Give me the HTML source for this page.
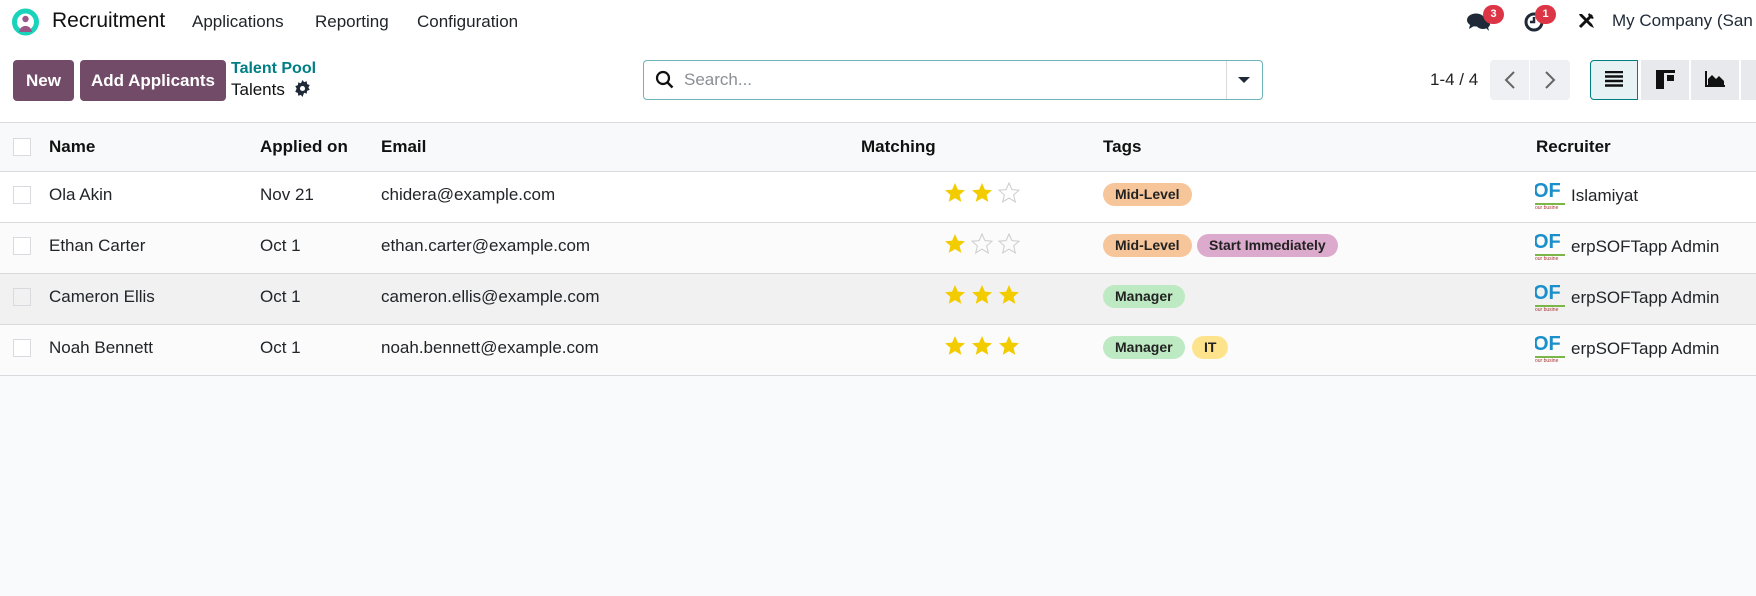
<!DOCTYPE html>
<html><head><meta charset="utf-8"><style>
*{box-sizing:border-box;margin:0;padding:0}
body{width:1756px;height:596px;background:#f9fafb;font-family:"Liberation Sans",sans-serif;color:#212529;position:relative;overflow:hidden}
.a{position:absolute;white-space:nowrap}
.nav{left:0;top:0;width:1756px;height:46px;background:#fff}
.top{left:0;top:46px;width:1756px;height:77px;background:#fff}
.btn{background:#714B67;color:#fff;font-weight:bold;font-size:17px;border-radius:4px;height:41px;line-height:41px;text-align:center;top:60px}
.hdr{left:0;top:122px;width:1756px;height:50px;background:#f8f9fa;border-top:1px solid #d8dadd;border-bottom:1px solid #d8dadd}
.row{left:0;width:1756px;height:51px;border-bottom:1px solid #d8dadd}
.cb{width:18px;height:18px;border:1px solid #d8dadd;background:#fff;left:13px}
.t{font-size:17px}
.th{font-size:17px;font-weight:bold;color:#111}
.tag{height:23px;line-height:23px;border-radius:12px;padding:0 12px;font-size:14px;font-weight:bold;color:#222}
.badge{background:#dc3545;color:#fff;font-size:11px;font-weight:bold;border-radius:10px;width:21px;height:19px;line-height:19px;text-align:center}
.vb{top:60px;height:40px;width:48px;background:#e7e9ed}
</style></head><body>
<div class="a nav"></div>
<div class="a top"></div>
<svg class="a" style="left:11px;top:8px" width="29" height="29" viewBox="0 0 29 29"><circle cx="14.5" cy="14" r="11" fill="none" stroke="#1ad3bb" stroke-width="5"/><circle cx="14.5" cy="11" r="3.2" fill="#9c5789"/><path d="M8 24c1-5 4-6 6.5-6s5.5 1 6.5 6z" fill="#9c5789"/></svg>
<div class="a" style="left:52px;top:9px;font-size:21px;color:#111">Recruitment</div>
<div class="a t" style="left:192px;top:12px;font-size:17px">Applications</div>
<div class="a t" style="left:315px;top:12px;font-size:17px">Reporting</div>
<div class="a t" style="left:417px;top:12px;font-size:17px">Configuration</div>
<svg class="a" style="left:1467px;top:12px" width="24" height="20" viewBox="0 0 24 20"><ellipse cx="9" cy="8" rx="9" ry="6.5" fill="#1f2937"/><path d="M3 13l-1 4 5-3z" fill="#1f2937"/><ellipse cx="16" cy="12" rx="7" ry="5" fill="#1f2937"/><path d="M19 16l3 3-1-4z" fill="#1f2937"/></svg>
<div class="a badge" style="left:1483px;top:5px">3</div>
<svg class="a" style="left:1523px;top:11px" width="22" height="22" viewBox="0 0 22 22"><circle cx="11" cy="11" r="8" fill="none" stroke="#1f2937" stroke-width="3"/><path d="M11 6v5h-4" stroke="#1f2937" stroke-width="2.5" fill="none"/></svg>
<div class="a badge" style="left:1535px;top:5px">1</div>
<svg class="a" style="left:1576px;top:11px" width="20" height="20" viewBox="0 0 20 20"><path d="M4 16L16 4" stroke="#111" stroke-width="3"/><path d="M13 2l5 5-2 1-4-4z" fill="#111"/><path d="M3 3l3 0 10 10 2 4-4-2L4 5z" fill="#111"/></svg>
<div class="a" style="left:1612px;top:11px;font-size:17px;color:#1f2937">My Company (San</div>

<div class="a btn" style="left:13px;width:61px">New</div>
<div class="a btn" style="left:80px;width:146px">Add Applicants</div>
<div class="a" style="left:231px;top:60px;font-size:16px;font-weight:bold;color:#017e84">Talent Pool</div>
<div class="a" style="left:231px;top:80px;font-size:17px;color:#111">Talents</div>
<svg class="a" style="left:294px;top:80px" width="17" height="17" viewBox="0 0 16 16"><path fill="#1f2937" d="M8 0l1.5 2 2.5-.8.3 2.6 2.5 1-1.3 2.2 1.3 2.2-2.5 1-.3 2.6-2.5-.8L8 16l-1.5-2-2.5.8-.3-2.6-2.5-1L2.5 8 1.2 5.8l2.5-1L4 2.2l2.5.8z"/><circle cx="8" cy="8" r="2.4" fill="#fff"/></svg>

<div class="a" style="left:643px;top:60px;width:620px;height:40px;border:1px solid #6eb3b8;border-radius:4px;background:#fff"></div>
<svg class="a" style="left:655px;top:70px" width="20" height="20" viewBox="0 0 20 20"><circle cx="8" cy="8" r="6" fill="none" stroke="#111" stroke-width="2.2"/><path d="M12.5 12.5l5 5" stroke="#111" stroke-width="2.4"/></svg>
<div class="a" style="left:684px;top:70px;font-size:17px;color:#8a8f95">Search...</div>
<div class="a" style="left:1226px;top:61px;width:1px;height:38px;background:#d8dadd"></div>
<svg class="a" style="left:1237px;top:76px" width="14" height="8" viewBox="0 0 14 8"><path d="M1 1h12L7 7z" fill="#1f2937"/></svg>

<div class="a" style="left:1430px;top:70px;font-size:17px;color:#222">1-4 / 4</div>
<div class="a" style="left:1490px;top:60px;width:80px;height:40px;background:#eff0f3;border-radius:4px"></div>
<div class="a" style="left:1529px;top:60px;width:1px;height:40px;background:#fff"></div>
<svg class="a" style="left:1503px;top:70px" width="14" height="20" viewBox="0 0 14 20"><path d="M11 2L3 10l8 8" stroke="#666" stroke-width="2" fill="none"/></svg>
<svg class="a" style="left:1543px;top:70px" width="14" height="20" viewBox="0 0 14 20"><path d="M3 2l8 8-8 8" stroke="#666" stroke-width="2" fill="none"/></svg>

<div class="a vb" style="left:1590px;background:#e6f2f3;border:1px solid #017e84;border-radius:4px 0 0 4px"></div>
<div class="a vb" style="left:1641px"></div>
<div class="a vb" style="left:1691px"></div>
<div class="a vb" style="left:1741px;width:15px"></div>
<svg class="a" style="left:1605px;top:71px" width="18" height="16" viewBox="0 0 18 16"><path d="M0 1h18M0 5.5h18M0 10h18M0 14.5h18" stroke="#111" stroke-width="2.5"/></svg>
<svg class="a" style="left:1656px;top:70px" width="19" height="19" viewBox="0 0 19 19"><path d="M0 0h19v3H8v16H0z" fill="#111"/><rect x="11" y="5" width="7" height="6" fill="#111"/></svg>
<svg class="a" style="left:1705px;top:71px" width="20" height="16" viewBox="0 0 20 16"><path d="M1 0v15h19" stroke="#111" stroke-width="2" fill="none"/><path d="M3 14V8l4-4 4 4 3-3 5 5v4z" fill="#111"/></svg>

<div class="a hdr"></div>
<div class="a cb" style="top:138px"></div>
<div class="a th" style="left:49px;top:137px">Name</div>
<div class="a th" style="left:260px;top:137px">Applied on</div>
<div class="a th" style="left:381px;top:137px">Email</div>
<div class="a th" style="left:861px;top:137px">Matching</div>
<div class="a th" style="left:1103px;top:137px">Tags</div>
<div class="a th" style="left:1536px;top:137px">Recruiter</div>

<div class="a row" style="top:172px;background:#fff"></div>
<div class="a row" style="top:223px;background:#fbfbfb"></div>
<div class="a row" style="top:274px;background:#f1f1f1"></div>
<div class="a row" style="top:325px;background:#fbfbfb"></div>

<div class="a cb" style="top:186px"></div><div class="a cb" style="top:237px"></div><div class="a cb" style="top:288px;background:#f1f1f1"></div><div class="a cb" style="top:339px"></div>

<div class="a t" style="left:49px;top:185px">Ola Akin</div>
<div class="a t" style="left:260px;top:185px">Nov 21</div>
<div class="a t" style="left:381px;top:185px">chidera@example.com</div>
<div class="a t" style="left:49px;top:236px">Ethan Carter</div>
<div class="a t" style="left:260px;top:236px">Oct 1</div>
<div class="a t" style="left:381px;top:236px">ethan.carter@example.com</div>
<div class="a t" style="left:49px;top:287px">Cameron Ellis</div>
<div class="a t" style="left:260px;top:287px">Oct 1</div>
<div class="a t" style="left:381px;top:287px">cameron.ellis@example.com</div>
<div class="a t" style="left:49px;top:338px">Noah Bennett</div>
<div class="a t" style="left:260px;top:338px">Oct 1</div>
<div class="a t" style="left:381px;top:338px">noah.bennett@example.com</div>

<svg width="0" height="0" style="position:absolute"><defs><path id="st" d="M11 1l2.9 6.6 7.1.6-5.4 4.7 1.7 7L11 16.1 4.7 19.9l1.7-7L1 8.2l7.1-.6z"/></defs></svg>
<svg class="a" style="left:944px;top:182px" width="82" height="22"><use href="#st" fill="#f3cc00"/><use href="#st" x="27" fill="#f3cc00"/><use href="#st" x="54" fill="none" stroke="#ccc"/></svg>
<svg class="a" style="left:944px;top:233px" width="82" height="22"><use href="#st" fill="#f3cc00"/><use href="#st" x="27" fill="none" stroke="#ccc"/><use href="#st" x="54" fill="none" stroke="#ccc"/></svg>
<svg class="a" style="left:944px;top:284px" width="82" height="22"><use href="#st" fill="#f3cc00"/><use href="#st" x="27" fill="#f3cc00"/><use href="#st" x="54" fill="#f3cc00"/></svg>
<svg class="a" style="left:944px;top:335px" width="82" height="22"><use href="#st" fill="#f3cc00"/><use href="#st" x="27" fill="#f3cc00"/><use href="#st" x="54" fill="#f3cc00"/></svg>

<div class="a tag" style="left:1103px;top:183px;background:#f6c69a">Mid-Level</div>
<div class="a tag" style="left:1103px;top:234px;background:#f6c69a">Mid-Level</div>
<div class="a tag" style="left:1197px;top:234px;background:#dcaacd">Start Immediately</div>
<div class="a tag" style="left:1103px;top:285px;background:#bdeac2">Manager</div>
<div class="a tag" style="left:1103px;top:336px;background:#bdeac2">Manager</div>
<div class="a tag" style="left:1192px;top:336px;background:#fde48c">IT</div>

<div class="a" style="left:1535px;top:181px;width:30px;height:30px;overflow:hidden"><div style="font:bold 20px 'Liberation Sans';color:#1b8fc9;line-height:20px;margin-left:-2px">OF</div><div style="height:2px;background:#7ab648;margin-top:2px"></div><div style="font-size:5px;color:#a33">our busine</div></div>
<div class="a" style="left:1535px;top:232px;width:30px;height:30px;overflow:hidden"><div style="font:bold 20px 'Liberation Sans';color:#1b8fc9;line-height:20px;margin-left:-2px">OF</div><div style="height:2px;background:#7ab648;margin-top:2px"></div><div style="font-size:5px;color:#a33">our busine</div></div>
<div class="a" style="left:1535px;top:283px;width:30px;height:30px;overflow:hidden"><div style="font:bold 20px 'Liberation Sans';color:#1b8fc9;line-height:20px;margin-left:-2px">OF</div><div style="height:2px;background:#7ab648;margin-top:2px"></div><div style="font-size:5px;color:#a33">our busine</div></div>
<div class="a" style="left:1535px;top:334px;width:30px;height:30px;overflow:hidden"><div style="font:bold 20px 'Liberation Sans';color:#1b8fc9;line-height:20px;margin-left:-2px">OF</div><div style="height:2px;background:#7ab648;margin-top:2px"></div><div style="font-size:5px;color:#a33">our busine</div></div>
<div class="a t" style="left:1571px;top:186px">Islamiyat</div>
<div class="a t" style="left:1571px;top:237px">erpSOFTapp Admin</div>
<div class="a t" style="left:1571px;top:288px">erpSOFTapp Admin</div>
<div class="a t" style="left:1571px;top:339px">erpSOFTapp Admin</div>
</body></html>
